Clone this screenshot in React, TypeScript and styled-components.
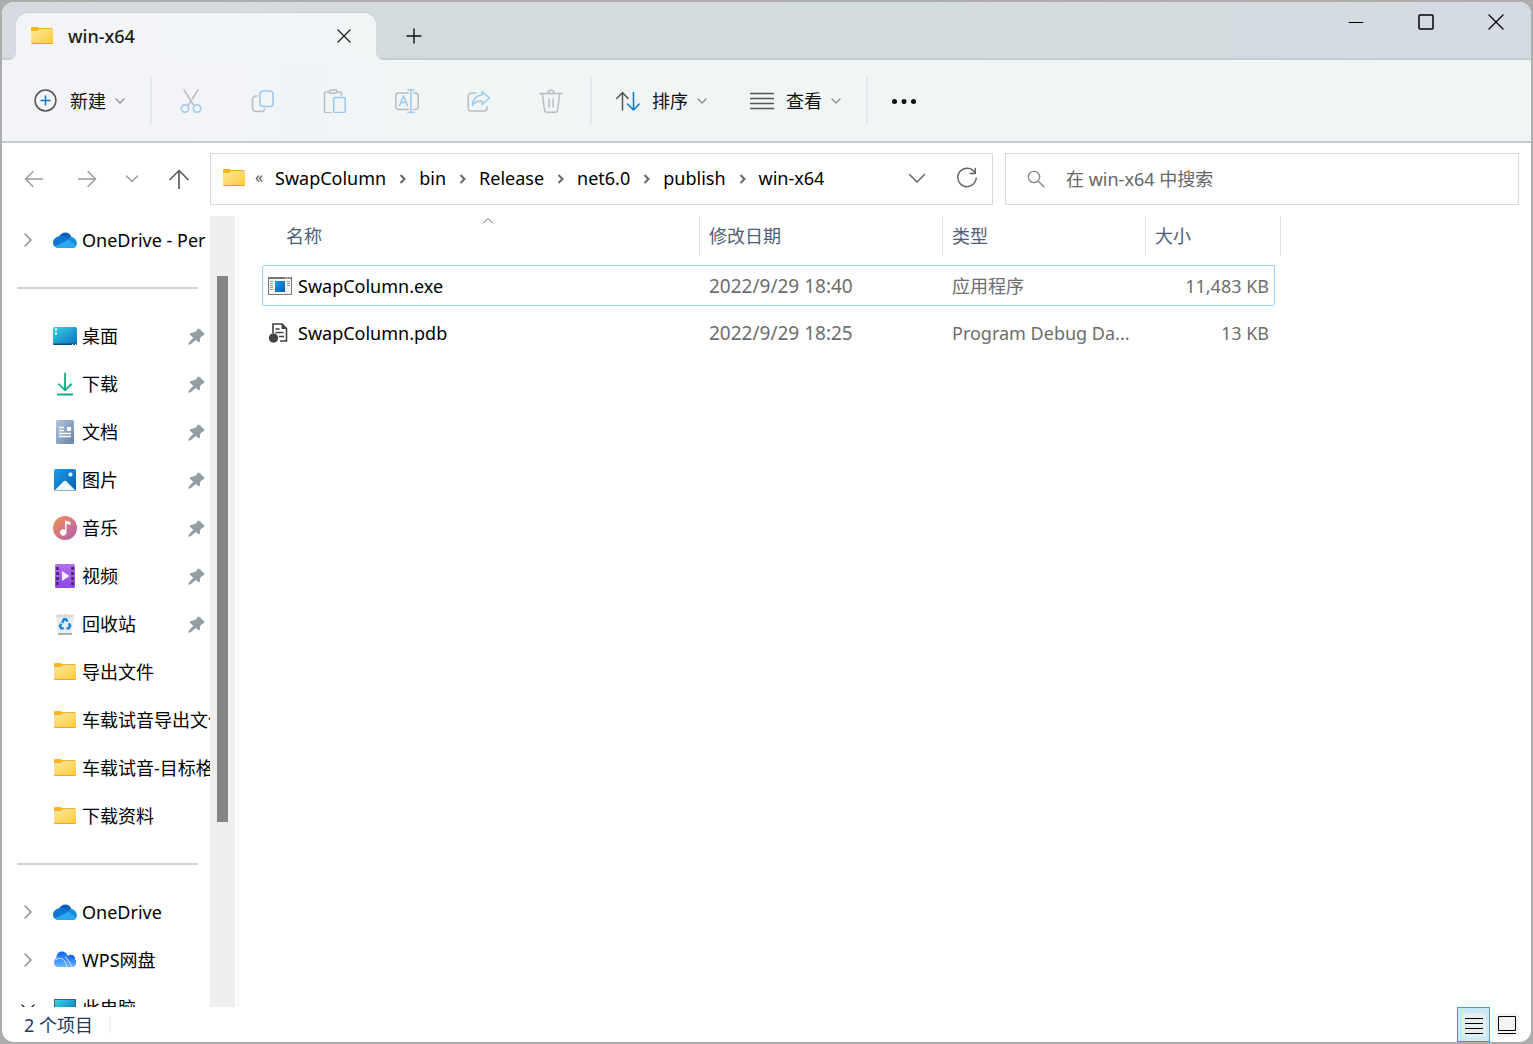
import React, { useState } from 'react';
import styled, { createGlobalStyle, css } from 'styled-components';

const GlobalStyle = createGlobalStyle`
  *, *::before, *::after { box-sizing: border-box; }
  body {
    margin: 0;
    background: #adadad;
    color: #000;
    font: 400 18px/24px "Noto Sans", "Noto Sans CJK SC", sans-serif;
    overflow: hidden;
  }
  button, input {
    margin: 0;
    padding: 0;
    border: 0;
    background: none;
    font: inherit;
    color: inherit;
  }
  svg { display: block; flex: none; }
`;

const Desktop = styled.div`
  height: 100vh;
  padding: 2px;
`;

const Window = styled.main`
  display: flex;
  flex-direction: column;
  height: 100%;
  border-radius: 12px;
  background: #fff;
  overflow: hidden;
`;

const TitleBar = styled.header`
  display: flex;
  align-items: flex-end;
  flex: none;
  height: 58px;
  padding-left: 14px;
  border-bottom: 2px solid #c5cfd3;
  background: linear-gradient(90deg, #d7dae1 0%, #d3dbdd 28%, #d3dcdd 60%, #d4dae2 100%);
`;

const flare = css`
  content: "";
  position: absolute;
  bottom: 0;
  width: 6px;
  height: 6px;
`;

const Tab = styled.div`
  position: relative;
  display: flex;
  align-items: center;
  width: 360px;
  height: 47px;
  margin-bottom: -2px;
  padding: 0 20px 2px 14px;
  border-radius: 12px 12px 0 0;
  background: linear-gradient(90deg, #f3f4f7, #f1f5f6);
  box-shadow: 0 -1px 0 #c8ced3;
  &::before {
    ${flare}
    left: -6px;
    background: radial-gradient(circle at 0 0, transparent 5px, #f3f4f7 6px);
  }
  &::after {
    ${flare}
    right: -6px;
    background: radial-gradient(circle at 100% 0, transparent 5px, #f1f5f6 6px);
  }
`;

const TabTitle = styled.span`
  flex: 1;
  margin-left: 14px;
  font-weight: 500;
  color: #1b1b1b;
`;

const IconButton = styled.button<{ $w?: number; $h?: number }>`
  display: flex;
  align-items: center;
  justify-content: center;
  flex: none;
  width: ${p => p.$w ?? 24}px;
  height: ${p => p.$h ?? 24}px;
`;

const NewTab = styled(IconButton)`
  margin-left: 14px;
`;

const WindowControls = styled.div`
  display: flex;
  align-self: flex-start;
  margin-left: auto;
`;

const Toolbar = styled.div`
  display: flex;
  align-items: center;
  flex: none;
  height: 83px;
  padding-left: 8px;
  border-bottom: 2px solid #c0cccd;
  background: linear-gradient(90deg, #f3f4f7 0%, #f3f4f7 12%, #f0f5f6 26%, #f0f5f6 100%);
`;

const ToolGroup = styled.div<{ $inset: number }>`
  display: flex;
  align-items: center;
  gap: ${p => (p.$inset > 10 ? 42 : 0)}px;
  padding: 0 ${p => p.$inset}px;
`;

const Separator = styled.div`
  width: 2px;
  height: 48px;
  background: #e3e7e9;
`;

const MenuButton = styled.button`
  display: flex;
  align-items: center;
  color: #111;
  span { margin: 0 8px 0 12px; }
`;

const NavRow = styled.div`
  display: grid;
  grid-template-columns: 208px minmax(0, 783fr) minmax(0, 526fr);
  flex: none;
  padding: 10px 12px 11px 0;
`;

const History = styled.nav`
  display: flex;
  align-items: center;
  justify-content: space-between;
  padding: 0 9px 0 12px;
`;

const Field = styled.div`
  display: flex;
  align-items: center;
  height: 52px;
  border: 1px solid #d9d9d9;
  background: #fff;
`;

const AddressBar = styled(Field)`
  padding: 0 13px 2px 11px;
`;

const Ellipsis = styled.span`
  width: 10px;
  margin: 0 10px 2px 9px;
  font-size: 16px;
  color: #555;
`;

const Crumbs = styled.ol`
  display: flex;
  flex: 1;
  min-width: 0;
  margin: 0;
  padding: 0;
  list-style: none;
  overflow: hidden;
`;

const Crumb = styled.li`
  display: flex;
  align-items: center;
  svg { margin: 2px 12px 0; }
`;

const AddressActions = styled.div`
  display: flex;
  gap: 26px;
`;

const SearchBar = styled(Field).attrs({ as: 'label' })`
  margin-left: 12px;
  padding: 0 20px;
`;

const SearchInput = styled.input`
  flex: 1;
  min-width: 0;
  margin-left: 20px;
  outline: 0;
  &::placeholder { color: #666; opacity: 1; }
`;

const Body = styled.div`
  display: flex;
  flex: 1;
  min-height: 0;
`;

const Sidebar = styled.aside`
  display: flex;
  flex: none;
  width: 237px;
  border-right: 2px solid #f6f6f6;
`;

const Tree = styled.ul`
  width: 208px;
  margin: 0;
  padding: 0;
  list-style: none;
  overflow: hidden;
`;

const TreeItem = styled.li`
  display: flex;
  align-items: center;
  height: 48px;
  padding: 0 5px 0 18px;
  white-space: nowrap;
`;

const Expander = styled.span`
  flex: none;
  width: 16px;
  margin-right: 17px;
`;

const TreeLabel = styled.span`
  flex: 1 0 auto;
  margin-left: 5px;
`;

const Divider = styled.li`
  height: 48px;
  padding: 23px 12px 0 15px;
  &::before {
    content: "";
    display: block;
    height: 2px;
    background: #d4d4d4;
  }
`;

const ScrollTrack = styled.div`
  width: 25px;
  padding: 60px 7px 185px;
  background: #efefef;
`;

const ScrollThumb = styled.div`
  width: 11px;
  height: 100%;
  background: #858585;
`;

const Files = styled.section`
  flex: 1;
  min-width: 0;
  padding-left: 23px;
  overflow: hidden;
`;

const FileTable = styled.table`
  display: block;
  thead, tbody { display: block; }
`;

const HeadRow = styled.tr`
  display: grid;
  grid-template-columns: 438px 243px 203px 135px;
  height: 40px;
  margin-bottom: 9px;
`;

const HeadCell = styled.th<{ $first?: boolean }>`
  position: relative;
  padding: 8px 0 0 ${p => (p.$first ? 24 : 9)}px;
  border-right: 1px solid #e2e2e2;
  color: #4c607a;
  font-weight: 400;
  text-align: left;
`;

const SortMark = styled.svg`
  position: absolute;
  top: 1px;
  left: 50%;
`;

const FileRow = styled.tr<{ $focused?: boolean }>`
  display: grid;
  grid-template-columns: 437px 243px 203px 128px;
  align-items: center;
  width: 1013px;
  height: 41px;
  margin-bottom: 6px;
  border: 1px solid ${p => (p.$focused ? '#99d1ff' : 'transparent')};
  border-radius: 2px;
`;

const NameCell = styled.td`
  display: flex;
  align-items: center;
  gap: 6px;
  padding: 0 0 0 5px;
`;

const InfoCell = styled.td<{ $right?: boolean }>`
  padding: 0 ${p => (p.$right ? 5 : 9)}px 0 9px;
  color: #6d6d6d;
  text-align: ${p => (p.$right ? 'right' : 'left')};
  white-space: nowrap;
  overflow: hidden;
  text-overflow: ellipsis;
`;

const DateCell = styled(InfoCell)`
  font-size: 19px;
`;

const StatusBar = styled.footer`
  display: flex;
  align-items: center;
  flex: none;
  height: 35px;
  padding: 0 8px 0 22px;
  color: #1e395b;
`;

const StatusText = styled.span`
  padding-right: 16px;
  border-right: 2px solid #f5f5f5;
  line-height: 18px;
`;

const ViewSwitch = styled.div`
  display: flex;
  align-items: center;
  margin-left: auto;
`;

const ViewButton = styled.button<{ $on?: boolean }>`
  display: flex;
  align-items: center;
  justify-content: center;
  width: 33px;
  height: 35px;
  border: 1px solid ${p => (p.$on ? '#2e9fd8' : 'transparent')};
  background: ${p => (p.$on ? '#cbe8f7' : 'transparent')};
`;

type Draw = { size?: number; color?: string; w?: number; children: React.ReactNode };

function Line({ size = 24, color = '#5c5c5c', w = 1.5, children }: Draw) {
  return (
    <svg width={size} height={size} viewBox={`0 0 ${size} ${size}`} fill="none" stroke={color}
      strokeWidth={w} strokeLinecap="round" strokeLinejoin="round" aria-hidden>
      {children}
    </svg>
  );
}

const GREY = '#b9bcbe';
const BLUE = '#98c9ec';

const GradientDefs = styled.svg`
  position: absolute;
`;

const Gradients = () => (
  <GradientDefs width="0" height="0" aria-hidden>
    <defs>
      <linearGradient id="folder" x1="0" y1="0" x2="1" y2="1"><stop stopColor="#ffe8a0" /><stop offset="1" stopColor="#ffc938" /></linearGradient>
      <linearGradient id="desk" x1="0" y1="0" x2="1" y2="1"><stop stopColor="#35d5e0" /><stop offset="1" stopColor="#0b6cc4" /></linearGradient>
      <linearGradient id="down" x1="0" y1="0" x2="1" y2="1"><stop stopColor="#3ccb84" /><stop offset="1" stopColor="#0a9c9a" /></linearGradient>
      <linearGradient id="doc" x1="0" y1="0" x2="1" y2="1"><stop stopColor="#b4c6dc" /><stop offset="1" stopColor="#6583a3" /></linearGradient>
      <linearGradient id="pic" x1="0" y1="0" x2="1" y2="1"><stop stopColor="#1c9ce6" /><stop offset="1" stopColor="#0560b5" /></linearGradient>
      <linearGradient id="music" x1="0" y1="0" x2="1" y2="1"><stop stopColor="#f5924f" /><stop offset="1" stopColor="#ad5cb4" /></linearGradient>
      <linearGradient id="video" x1="0" y1="0" x2="0" y2="1"><stop stopColor="#b56ef0" /><stop offset="1" stopColor="#8a48e6" /></linearGradient>
      <linearGradient id="wps" x1="0" y1="0" x2="0" y2="1"><stop stopColor="#0d63f2" /><stop offset="1" stopColor="#6cb8ff" /></linearGradient>
    </defs>
  </GradientDefs>
);

const Icon24 = ({ children }: { children: React.ReactNode }) => (
  <svg width="24" height="24" viewBox="0 0 24 24" aria-hidden>{children}</svg>
);

const Folder = () => (
  <Icon24>
    <path d="M1 4a1 1 0 0 1 1-1h6l1.500 1.500L8.500 8H1z" fill="#fbb51c" />
    <path d="M1 7h6.500l2-2H22a1 1 0 0 1 1 1v13a1 1 0 0 1-1 1H2a1 1 0 0 1-1-1z" fill="url(#folder)" />
    <path d="M9 4.500h13.500" stroke="#f0ae2b" />
    <path d="M1.500 19.500h21" stroke="#eea61b" />
  </Icon24>
);

const OneDrive = () => (
  <Icon24>
    <path d="M6 9C8 3.500 16 2.500 18.500 9L14 14 6 10z" fill="#0a5fb8" />
    <path d="M5 8.500c2.500-1 5.500-.5 7.500.8L16 12l-12 7.500C-1.500 18.500-1.500 10.500 5 8.500z" fill="#0d78d4" />
    <path d="M14.500 11.200C16 8.300 20 8 22 11c3 3 2.500 8-2 9z" fill="#1590df" />
    <path d="M2 18.500 14.800 12l8.600 5.500C22.500 19.500 21.500 20 20 20H5.500c-1.200 0-2.500-.3-3.500-1.500z" fill="#29a8ec" />
  </Icon24>
);

const Wps = () => (
  <Icon24>
    <path d="M16 7c5-1 6.500 2 6 4.500 2.500 3 .5 7.500-3 7.500h-4z" fill="#1567ea" />
    <path d="M3.500 10C3 4 9 1.500 13 5c3 3 2 7 9.500 11-1 2-2 3-4 3h-13C0 19 0 12 3.500 10z" fill="url(#wps)" />
    <path d="M13 9.500c4-4 8-2 9 2 2.500 3 .5 7.500-3 7.500h-2c0-4-1-7-4-9.500z" fill="url(#wps)" />
    <path d="M3 11.500c6-3 9 0 11 7.500M12 8.500c3 2 4 6 7 10" stroke="#d5e9ff" fill="none" />
  </Icon24>
);

const DesktopIcon = () => (
  <Icon24>
    <rect y="3" width="24" height="18" rx="1.500" fill="url(#desk)" />
    <path d="M0 19.500h24v.5a1 1 0 0 1-1 1H1a1 1 0 0 1-1-1z" fill="#0b4f87" />
    <path d="M2 5.500h2M2 9.500h2" stroke="#fff" strokeWidth="2" />
    <path d="M19 20.500h1M22 20.500h1" stroke="#fff" />
  </Icon24>
);

const DownloadIcon = () => (
  <Icon24>
    <path d="M11 .8h2V16l5-5 1.400 1.400L12 19.600l-7.400-7.200L6 11l5 5zM4 21.500h16v2H4z" fill="url(#down)" />
  </Icon24>
);

const DocumentIcon = () => (
  <Icon24>
    <rect x="3" width="18" height="24" rx="1.500" fill="url(#doc)" />
    <path d="M6 7.500h5M6 10.500h5M6 13.500h12M6 16.500h12" stroke="#fff" strokeWidth="1.300" />
    <path d="M14 7h4v4h-4z" fill="#fff" />
  </Icon24>
);

const PictureIcon = () => (
  <Icon24>
    <rect x="1" y="1" width="22" height="22" rx="2" fill="url(#pic)" />
    <path d="m2 22 8.500-8.600q1.500-1.500 3 0L22 22l-1 .5H3z" fill="#f2f8fd" />
    <circle cx="17.500" cy="6.500" r="2" fill="#fff" />
  </Icon24>
);

const MusicIcon = () => (
  <Icon24>
    <circle cx="12" cy="12" r="12" fill="url(#music)" />
    <path d="M12 4.500 17.500 6v3L13.500 8v8.500a3.300 3.300 0 1 1-1.500-2.800z" fill="#fff" />
  </Icon24>
);

const VideoIcon = () => (
  <Icon24>
    <rect x="2" width="20" height="24" rx="1.500" fill="url(#video)" />
    <path d="M4.500 3v19M19.500 3v19" stroke="#4a2574" strokeWidth="2.600" strokeDasharray="3 2" />
    <path d="m9 7 7.500 5L9 17z" fill="#f6effd" />
  </Icon24>
);

const BinIcon = () => (
  <Icon24>
    <path d="M3 3h18l-2 19q0 1-1 1H6q-1 0-1-1z" fill="#e8ecee" />
    <path d="M3 3.500 7 2l3 1 3-1.200L17 3l4-.5-1 3H4z" fill="#d4d9dc" />
    <path d="M5 21h14v1q0 1-1 1H6q-1 0-1-1z" fill="#a9afb3" />
    <g fill="none" stroke="#1684dc" strokeWidth="2.400">
      <path d="m9 10.800 2-3.500h2l1.500 2.400" />
      <path d="m15.800 11.300 1.400 2.500-1.400 2.600h-2.300" />
      <path d="M10.800 16.400H8.300L6.900 14l1.200-2.200" />
    </g>
  </Icon24>
);

const PcIcon = () => (
  <Icon24>
    <rect x="1" y="3" width="22" height="16" fill="#4a5a66" />
    <rect x="2" y="4" width="20" height="14" fill="url(#desk)" />
  </Icon24>
);

const Pin = () => (
  <svg width="17" height="17" viewBox="0 0 17 17" aria-hidden>
    <path d="M9.800 1q1-1 2 0l4.200 4.200q1 1.200-.3 2l-3.200 2-.8 4.200q-.4 1.500-1.600.6L7.800 12 2.300 16.600l-1.900.1.100-1.700 4.800-5.200L2 7q-1.200-1.200.3-1.800L7.500 3.800z" fill="#949fa5" />
  </svg>
);

const ExeIcon = () => (
  <Icon24>
    <rect x=".5" y="3.500" width="23" height="17" fill="#f7f7f7" stroke="#767676" />
    <path d="M0 4h24" stroke="#767676" strokeWidth="2" />
    <path d="M17 4h1M19 4h1M21 4h1" stroke="#fff" />
    <path d="M2 7.500h3M2 9.500h3M2 11.500h3M2 13.500h3M2 15.500h3M19 7.500h3M19 9.500h3M19 11.500h3" stroke="#999" />
    <rect x="7" y="7" width="10" height="11" fill="url(#pic)" />
  </Icon24>
);

const PdbIcon = () => (
  <Icon24>
    <path d="M5 12V3h9l4.500 4.500V20H12" fill="none" stroke="#424242" strokeWidth="1.600" />
    <path d="M13.500 3v5h5z" fill="#424242" />
    <path d="M7.500 8h4M7.500 11.500h8M11 15.500h5" stroke="#424242" strokeWidth="1.500" />
    <circle cx="5.500" cy="17" r="4.700" fill="#424242" />
  </Icon24>
);

const Down = () => <Line size={12} color="#8a8a8a" w={1.2}><path d="m2 4 4 4 4-4" /></Line>;

const CRUMBS = ['SwapColumn', 'bin', 'Release', 'net6.0', 'publish', 'win-x64'];

type Node = { label: string; icon: () => React.ReactElement; pin?: boolean; state?: 'closed' | 'open' };

const CLOUD: Node[] = [{ label: 'OneDrive - Per', icon: OneDrive, state: 'closed' }];
const QUICK: Node[] = [
  { label: '桌面', icon: DesktopIcon, pin: true },
  { label: '下载', icon: DownloadIcon, pin: true },
  { label: '文档', icon: DocumentIcon, pin: true },
  { label: '图片', icon: PictureIcon, pin: true },
  { label: '音乐', icon: MusicIcon, pin: true },
  { label: '视频', icon: VideoIcon, pin: true },
  { label: '回收站', icon: BinIcon, pin: true },
  { label: '导出文件', icon: Folder },
  { label: '车载试音导出文件', icon: Folder },
  { label: '车载试音-目标格', icon: Folder },
  { label: '下载资料', icon: Folder },
];
const DRIVES: Node[] = [
  { label: 'OneDrive', icon: OneDrive, state: 'closed' },
  { label: 'WPS网盘', icon: Wps, state: 'closed' },
  { label: '此电脑', icon: PcIcon, state: 'open' },
];

const FILES = [
  { name: 'SwapColumn.exe', date: '2022/9/29 18:40', type: '应用程序', size: '11,483 KB', icon: ExeIcon },
  { name: 'SwapColumn.pdb', date: '2022/9/29 18:25', type: 'Program Debug Da...', size: '13 KB', icon: PdbIcon },
];

const renderNodes = (nodes: Node[]) =>
  nodes.map(({ label, icon: Icon, pin, state }) => (
    <TreeItem key={label}>
      <Expander>
        {state === 'closed' && <Line size={16} color="#8c8c8c"><path d="m5 2 6 6-6 6" /></Line>}
        {state === 'open' && <Line size={16} color="#333"><path d="m2 5 6 6 6-6" /></Line>}
      </Expander>
      <Icon />
      <TreeLabel>{label}</TreeLabel>
      {pin && <Pin />}
    </TreeItem>
  ));

export default function App() {
  const [query, setQuery] = useState('');
  return (
    <Desktop>
      <GlobalStyle />
      <Gradients />
      <Window>
        <TitleBar>
          <Tab>
            <Folder />
            <TabTitle>win-x64</TabTitle>
            <IconButton aria-label="关闭标签页"><Line size={14} color="#222" w={1.3}><path d="m1 1 12 12M13 1 1 13" /></Line></IconButton>
          </Tab>
          <NewTab aria-label="新标签页" $w={48} $h={44}><Line size={16} color="#111" w={1.4}><path d="M8 1v14M1 8h14" /></Line></NewTab>
          <WindowControls>
            <IconButton aria-label="最小化" $w={70} $h={40}><Line size={16} color="#000" w={1}><path d="M1 8.500h14" /></Line></IconButton>
            <IconButton aria-label="最大化" $w={70} $h={40}><Line size={16} color="#000"><rect x="1" y="1" width="14" height="14" rx="1" /></Line></IconButton>
            <IconButton aria-label="关闭" $w={70} $h={40}><Line size={16} color="#000" w={1.3}><path d="m1 1 14 14M15 1 1 15" /></Line></IconButton>
          </WindowControls>
        </TitleBar>

        <Toolbar>
          <ToolGroup $inset={24}>
            <MenuButton>
              <Line color="#555"><circle cx="11.500" cy="11.500" r="10.400" /><path d="M11.500 7v9M7 11.500h9" stroke="#0a78d0" /></Line>
              <span>新建</span><Down />
            </MenuButton>
          </ToolGroup>
          <Separator />
          <ToolGroup $inset={3}>
            <IconButton aria-label="剪切" $w={72} $h={48}>
              <Line color={GREY}><path d="M5 .8 14.500 16M19 .8 13.300 10M11.300 13 9.500 16" /><g stroke={BLUE}><circle cx="6" cy="19.500" r="3.700" /><circle cx="18" cy="19.500" r="3.700" /></g></Line>
            </IconButton>
            <IconButton aria-label="复制" $w={72} $h={48}>
              <Line color={GREY}><path d="M6 7H5a3.500 3.500 0 0 0-3.500 3.500V19A3.500 3.500 0 0 0 5 22.500h5.500A3.500 3.500 0 0 0 13.800 20" /><rect x="9" y="2" width="13" height="15.500" rx="3.300" stroke={BLUE} /></Line>
            </IconButton>
            <IconButton aria-label="粘贴" $w={72} $h={48}>
              <Line color={GREY}><path d="M6.500 3H3a1.500 1.500 0 0 0-1.500 1.500v17.700a1.500 1.500 0 0 0 1.500 1.500h5M14 3h3a1.500 1.500 0 0 1 1.500 1.500V6" /><rect x="6.500" y="1" width="7.500" height="3.300" rx="1.600" /><rect x="10.700" y="8.500" width="11.500" height="15" rx="1.500" stroke={BLUE} /></Line>
            </IconButton>
            <IconButton aria-label="重命名" $w={72} $h={48}>
              <Line color={GREY}><path d="M13.500 4H3.500A3 3 0 0 0 .8 7v10a3 3 0 0 0 2.700 3.500h10M18.500 4h2a3 3 0 0 1 2.700 3v10a3 3 0 0 1-2.700 3.500h-2" /><path d="m4.500 16.500 4-9.500 4 9.500M6 13.500h5M16 1v22.500M13 1h6M13 23.500h6" stroke={BLUE} /></Line>
            </IconButton>
            <IconButton aria-label="共享" $w={72} $h={48}>
              <Line color={GREY}><path d="M8.500 4H4.500A3.300 3.300 0 0 0 1.200 7.300v11.500a3.300 3.300 0 0 0 3.300 3.300H17a3.300 3.300 0 0 0 3.200-3.300v-1" /><path d="M15 2.500 22.500 9 15 15.500V12c-4-.3-7 1-9.500 4C6 10.500 9.500 6.500 15 6z" stroke={BLUE} /></Line>
            </IconButton>
            <IconButton aria-label="删除" $w={72} $h={48}>
              <Line color={GREY}><path d="M1 4.500h22M9 4.300a3 3 0 0 1 6 0M3.300 4.500 5.500 21a2.500 2.500 0 0 0 2.500 2.300h8a2.500 2.500 0 0 0 2.500-2.300l2.200-16.500M10 10v8M14 10v8" /></Line>
            </IconButton>
          </ToolGroup>
          <Separator />
          <ToolGroup $inset={24}>
            <MenuButton>
              <Line color="#555"><path d="M6.500 21V3.500M.8 9.500l5.700-6 5.500 6" /><path d="M17.500 3.500V21M11.500 15l6 6 5.700-6" stroke="#0a78d0" /></Line>
              <span>排序</span><Down />
            </MenuButton>
            <MenuButton>
              <Line color="#555" w={1.3}><path d="M.5 4.500h23M.5 9.500h23M.5 14.500h23M.5 19.500h23" /></Line>
              <span>查看</span><Down />
            </MenuButton>
          </ToolGroup>
          <Separator />
          <ToolGroup $inset={24}>
            <IconButton aria-label="查看更多">
              <svg width="24" height="24" viewBox="0 0 24 24" fill="#111" aria-hidden><circle cx="2.500" cy="12.500" r="2.500" /><circle cx="12" cy="12.500" r="2.500" /><circle cx="21.500" cy="12.500" r="2.500" /></svg>
            </IconButton>
          </ToolGroup>
        </Toolbar>

        <NavRow>
          <History>
            <IconButton aria-label="后退" $w={40} $h={40}><Line size={20} color="#9b9b9b"><path d="M18.500 10h-17M9 2.500 1.500 10 9 17.500" /></Line></IconButton>
            <IconButton aria-label="前进" $w={40} $h={40}><Line size={20} color="#9b9b9b"><path d="M1.500 10h17M11 2.500l7.500 7.500-7.500 7.500" /></Line></IconButton>
            <IconButton aria-label="最近的位置" $h={40}><Line size={16} color="#9b9b9b"><path d="m2.500 5 5.500 5.500L13.500 5" /></Line></IconButton>
            <IconButton aria-label="向上" $w={44} $h={40}><Line size={20} color="#5c5c5c" w={1.7}><path d="M10 19.500v-18M1 10.500l9-9 9 9" /></Line></IconButton>
          </History>
          <AddressBar>
            <Folder />
            <Ellipsis>«</Ellipsis>
            <Crumbs>
              {CRUMBS.map((name, i) => (
                <Crumb key={name}>
                  <button>{name}</button>
                  {i < CRUMBS.length - 1 && (
                    <svg width="9" height="12" viewBox="0 0 9 12" fill="none" stroke="#666" strokeWidth="2" aria-hidden><path d="m2.500 2 4 4-4 4" /></svg>
                  )}
                </Crumb>
              ))}
            </Crumbs>
            <AddressActions>
              <IconButton aria-label="以前的位置"><Line size={18} color="#666"><path d="m1.500 5.500 7.500 7.500 7.500-7.500" /></Line></IconButton>
              <IconButton aria-label="刷新"><Line size={22} color="#666"><path d="M18.800 5.500A9.200 9.200 0 1 0 20.200 11M19.300 1.500v5h-5" /></Line></IconButton>
            </AddressActions>
          </AddressBar>
          <SearchBar>
            <Line size={20} color="#858585" w={1.3}><circle cx="8" cy="8" r="5.700" /><path d="m12.300 12.300 5.500 5.500" /></Line>
            <SearchInput type="search" aria-label="搜索" placeholder="在 win-x64 中搜索" value={query} onChange={e => setQuery(e.target.value)} />
          </SearchBar>
        </NavRow>

        <Body>
          <Sidebar>
            <Tree>
              {renderNodes(CLOUD)}
              <Divider />
              {renderNodes(QUICK)}
              <Divider />
              {renderNodes(DRIVES)}
            </Tree>
            <ScrollTrack><ScrollThumb /></ScrollTrack>
          </Sidebar>
          <Files>
            <FileTable cellSpacing={0}>
              <thead>
                <HeadRow>
                  <HeadCell $first>
                    名称
                    <SortMark width="14" height="8" viewBox="0 0 14 8" fill="none" stroke="#666"><path d="m2 6.500 5-5 5 5" /></SortMark>
                  </HeadCell>
                  <HeadCell>修改日期</HeadCell>
                  <HeadCell>类型</HeadCell>
                  <HeadCell>大小</HeadCell>
                </HeadRow>
              </thead>
              <tbody>
                {FILES.map(({ name, date, type, size, icon: Icon }, i) => (
                  <FileRow key={name} $focused={i === 0}>
                    <NameCell><Icon />{name}</NameCell>
                    <DateCell>{date}</DateCell>
                    <InfoCell>{type}</InfoCell>
                    <InfoCell $right>{size}</InfoCell>
                  </FileRow>
                ))}
              </tbody>
            </FileTable>
          </Files>
        </Body>

        <StatusBar>
          <StatusText>2 个项目</StatusText>
          <ViewSwitch>
            <ViewButton $on aria-label="详细信息">
              <svg width="24" height="24" viewBox="0 0 24 24" aria-hidden><rect width="24" height="24" rx="3" fill="#e3eef1" /><path d="M3 5.500h18M3 10.500h18M3 15.500h18M3 20.500h18" stroke="#000" /></svg>
            </ViewButton>
            <ViewButton aria-label="大缩略图">
              <svg width="24" height="24" viewBox="0 0 24 24" aria-hidden><rect width="24" height="24" rx="3" fill="#f4f4f4" /><path d="M3.500 3.500h17v14h-17zM3 20.500h18" fill="none" stroke="#000" /></svg>
            </ViewButton>
          </ViewSwitch>
        </StatusBar>
      </Window>
    </Desktop>
  );
}
